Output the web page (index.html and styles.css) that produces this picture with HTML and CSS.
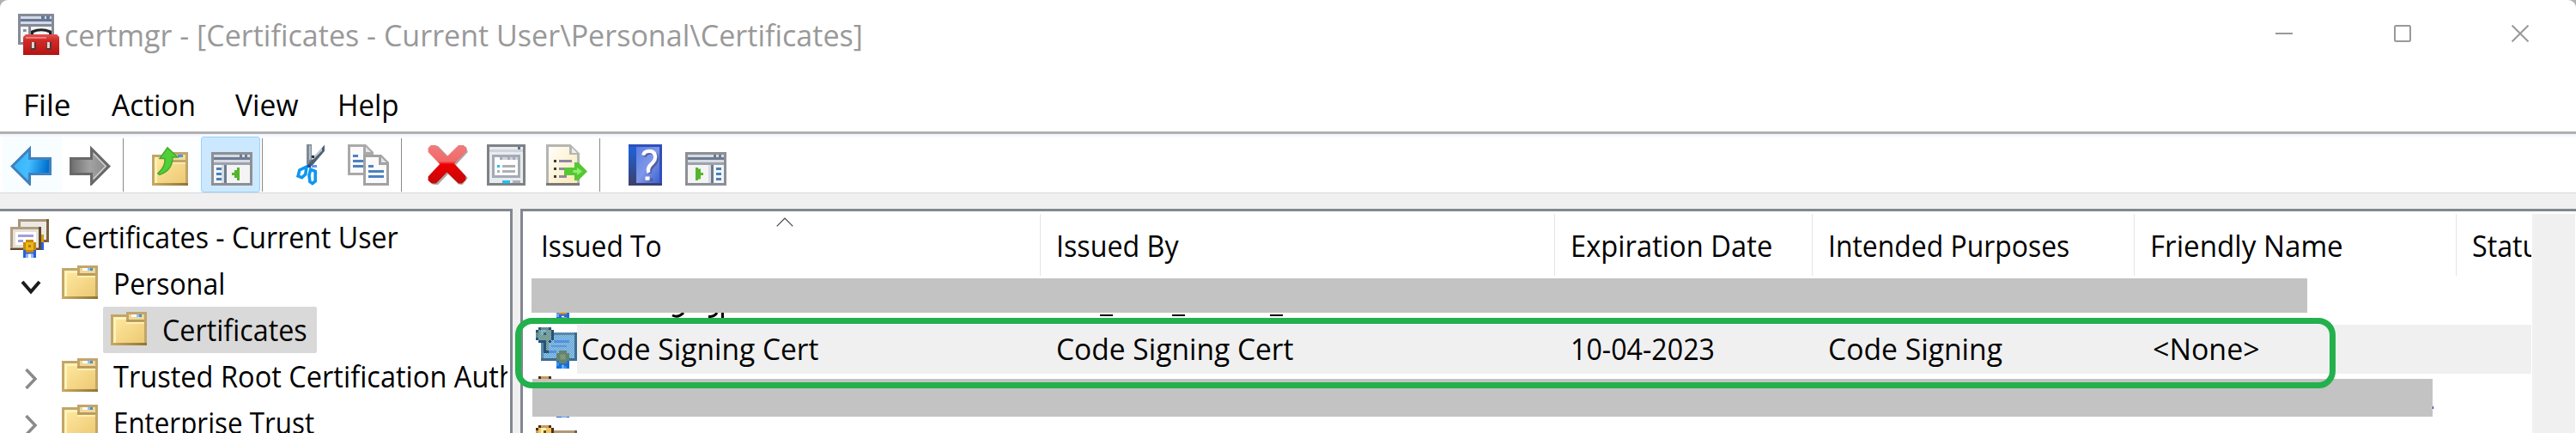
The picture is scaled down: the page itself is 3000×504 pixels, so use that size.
FILE: index.html
```html
<!DOCTYPE html>
<html lang="en">
<head>
<meta charset="utf-8">
<title>certmgr</title>
<link rel="stylesheet" href="styles.css">
</head>
<body>
<svg class="defs" width="0" height="0">
  <defs>
    <linearGradient id="blue" x1="0" x2="1" y1="0" y2="0.2"><stop offset="0" stop-color="#2fb0f8"/><stop offset=".5" stop-color="#45beff"/><stop offset="1" stop-color="#0070cf"/></linearGradient>
    <linearGradient id="gray" x1="0" x2="1"><stop offset="0" stop-color="#6d6d6d"/><stop offset=".5" stop-color="#a2a2a2"/><stop offset="1" stop-color="#858585"/></linearGradient>
    <linearGradient id="gold" x1="0" x2="1" y1="0" y2="1"><stop offset="0" stop-color="#ffe9a0"/><stop offset="1" stop-color="#edc974"/></linearGradient>
    <linearGradient id="edge" x1="0" x2="1"><stop offset="0" stop-color="#c9aa62"/><stop offset="1" stop-color="#8f7434"/></linearGradient>
    <linearGradient id="red" x1="0" x2="0" y1="0" y2="1"><stop offset="0" stop-color="#f07c7c"/><stop offset=".42" stop-color="#f26868"/><stop offset=".5" stop-color="#ee0000"/><stop offset="1" stop-color="#c40808"/></linearGradient>
    <linearGradient id="page" x1="0" x2="1" y1="0" y2="1"><stop offset="0" stop-color="#fffefa"/><stop offset="1" stop-color="#fbe9b4"/></linearGradient>
    <linearGradient id="book" x1="0" x2="1" y1="0" y2="1"><stop offset="0" stop-color="#5b7fe0"/><stop offset=".5" stop-color="#7f97ea"/><stop offset="1" stop-color="#3d62d0"/></linearGradient>
    <linearGradient id="spine" x1="0" x2="0" y1="0" y2="1"><stop offset="0" stop-color="#1f62dc"/><stop offset="1" stop-color="#3a4270"/></linearGradient>
    <linearGradient id="box" x1="0" x2="0" y1="0" y2="1"><stop offset="0" stop-color="#e25450"/><stop offset=".3" stop-color="#d02a28"/><stop offset="1" stop-color="#b31414"/></linearGradient>
    <pattern id="dither" width=".66667" height=".66667" patternUnits="userSpaceOnUse"><rect width=".33333" height=".33333" fill="#0078d7"/><rect x=".33333" y=".33333" width=".33333" height=".33333" fill="#0078d7"/></pattern>
    <symbol id="folder" viewBox="0 0 14 13">
      <path fill="#c2a56a" d="M0 1H6V0H14V13H0Z"/>
      <path fill="url(#gold)" d="M1 2H6V4H13V12H1Z"/>
      <path fill="#fff3b8" d="M1 2H6V3H1ZM1 3H2V12H1ZM6 4H13V4.6H6Z"/>
      <path fill="#f1d796" d="M7 1H13V3H7Z"/>
      <path fill="#b9985a" d="M6 3H13V3.7H6Z"/>
      <rect x="8" y="1" width="2" height="1" fill="#fff"/><rect x="10" y="1" width="1" height="1" fill="#8fc3ff"/><rect x="11" y="1" width="1" height="1" fill="#3d93d6"/>
      <rect y="12" width="14" height="1" fill="url(#edge)"/>
    </symbol>
    <symbol id="cert" viewBox="0 0 16 16">
      <path fill="#b09a7a" d="M2 2H16V13H2Z"/><path fill="#7b6040" d="M15 2H16V13H15ZM2 12H16V13H2Z"/>
      <path fill="#f4efe6" d="M3 3H15V12H3Z"/>
      <path fill="#a9a9dc" d="M7 5H13V6H7ZM5 9H8V10H5ZM6 7H12V7.6H6Z"/>
      <path fill="#4a3018" d="M1 0H6V1H7V5H6V6H5V10H3V6H1V5H0V1H1Z"/>
      <path fill="#c99a58" d="M2 0H5V1H2ZM0 2H1V4H0Z"/>
      <path fill="#f0c45c" d="M1 1H6V5H5V9H4V5H1Z"/><path fill="#fff0b0" d="M2 1H4V3H2Z"/><rect x="3" y="2" width="1" height="1" fill="#6b4a1c"/>
      <path fill="#2a66dc" d="M8 13H13V16H11V14.6H10V16H8Z"/><path fill="#6aa9ff" d="M8 13.500H9V15H8ZM10 15H12V16H10Z"/>
      <path fill="#c98d08" d="M9 9H12V10H13V13H12V14H9V13H8V10H9Z"/><path fill="#f6bd1c" d="M9.500 10.500H11.500V12.500H9.500Z"/>
    </symbol>
  </defs>
</svg>

<div class="window">
  <header class="titlebar">
    <svg class="app-icon" viewBox="0 0 16 16">
      <path fill="#858b96" d="M0 0H14V12H0Z"/><path fill="#d3d9e4" d="M1 1H13V2H1ZM1 3H13V4H1Z"/><path fill="#66789a" d="M1 2H13V3H1ZM9 .7H10.300V2H9ZM11 .7H12.300V2H11Z"/>
      <path fill="#f2f3f6" d="M1 5H4V11H1ZM5 5H13V9H5Z"/><path fill="#8791a0" d="M2 6H3.200V7H2Z"/>
      <path fill="none" stroke="#222" stroke-width="1" d="M5.500 8V7Q9 5.500 12.500 7V8"/>
      <path fill="url(#box)" d="M3 8H15L16 9V16H2V9Z"/><path fill="#e98783" d="M3 9H11V9.600H3Z"/>
      <path fill="#5b3431" d="M5 11H7V14H5ZM11 11H13V14H11Z"/><path fill="#e3d9d4" d="M5.300 11H6.300V13.300H5.300ZM11.300 11H12.300V13.300H11.300Z"/>
    </svg>
    <span class="label title">certmgr - [Certificates - Current User\Personal\Certificates]</span>
    <div class="controls">
      <svg viewBox="0 0 20 20"><path d="M0 10H20"/></svg>
      <svg viewBox="0 0 20 20"><rect x="1" y="1" width="18" height="18" rx="1.500"/></svg>
      <svg viewBox="0 0 20 20"><path d="M.5 .5L19.500 19.500M19.500 .5L.5 19.500"/></svg>
    </div>
  </header>

  <nav class="menubar">
    <div class="menu-file"><span class="label">File</span></div>
    <div class="menu-action"><span class="label">Action</span></div>
    <div class="menu-view"><span class="label">View</span></div>
    <div class="menu-help"><span class="label">Help</span></div>
  </nav>

  <div class="toolbar">
    <div class="group">
      <span class="btn hot"><svg viewBox="0 0 16 16"><path fill="url(#blue)" stroke="#3f82bd" d="M.7 8.500L7.500 1.700V5.500H15.500V11.500H7.500V15.300Z"/></svg></span>
      <span class="btn"><svg viewBox="0 0 16 16"><path fill="url(#gray)" stroke="#696969" d="M15.300 8.500L8.500 1.700V5.500H.5V11.500H8.500V15.300Z"/><path fill="none" stroke="#cfcfcf" stroke-width=".5" d="M9.300 3.600L14 8.500L9.300 13.400"/></svg></span>
    </div>
    <div class="group nav">
      <span class="btn up"><svg viewBox="0 0 16 16">
        <path fill="#c2a56a" d="M0 4H7V3H14V16H0Z"/><path fill="url(#gold)" d="M1 5H7V7H13V15H1Z"/><path fill="#fff1b4" d="M1 5H2V15H1ZM6 7H13V7.500H6Z"/><path fill="#f3dc9c" d="M8 4H13V6H8Z"/><path fill="#4b96dd" d="M10 4H12V5H10Z"/><path fill="url(#edge)" d="M0 15H14V16H0Z"/>
        <path fill="#4fcf38" stroke="#4aa82c" stroke-width=".5" d="M6 1.300L10 5H8Q8 10 3 11.800L2.300 11.300Q5.300 8.700 5 5.500H3Z"/></svg></span>
      <span class="btn active"><svg viewBox="0 0 16 16">
        <path fill="#8c9096" d="M0 3H16V16H0Z"/><path fill="#d5dbe2" d="M1 4H15V5H1ZM1 6H15V7H1Z"/><path fill="#6d7a91" d="M1 5H15V6H1ZM11 4H12V5H11ZM13 4H14V5H13Z"/><path fill="#9ca1ae" d="M1 7H15V8H1Z"/><path fill="#f4f4f4" d="M1 8H15V15H1Z"/><path fill="#d7dce4" d="M4 8H5V15H4Z"/><path fill="#6d7a91" d="M5 8H6V15H5Z"/><path fill="#4381c0" d="M2 9H4V10H2ZM2 11H4V12H2ZM2 13H4V14H2Z"/><path fill="#55b52c" d="M8 11H9V10H10V9H11V14H10V13H9V12H8Z"/></svg></span>
    </div>
    <div class="group">
      <span class="btn"><svg viewBox="0 0 16 16">
        <path fill="#7d8a96" d="M7 0H9V7L8 9L7 7.500Z"/><path fill="#b9c6d0" d="M8 .5H8.600V6H8Z"/><path fill="#4f6070" d="M14 .2V2.600L9 8.500L7.800 7.500Z"/><path fill="#b9c6d0" d="M13 1.300V2.500L9.500 6L9.300 5.200Z"/><path fill="#2b3138" d="M9 4.300H10V5.300H9Z"/>
        <path fill="none" stroke="#0f97ee" stroke-width="1.200" d="M7 8.700L4.300 10L3.700 12.300L5.200 12.900L6.600 11.600Z"/><path fill="none" stroke="#0f97ee" stroke-width="1.200" d="M8.600 9.700L10.400 10.500V14.300L9.300 15.200L8.300 14.500L8 12Z"/><path fill="#6c93f2" d="M9 8H11V9H9Z"/><path fill="#214b92" d="M7.300 7.800H8.700V9H7.300Z"/></svg></span>
      <span class="btn"><svg viewBox="0 0 16 16">
        <path fill="#a9a9a9" d="M0 0H7L10 3V12H0Z"/><path fill="#fafafa" d="M1 1H6V4H9V11H1Z"/><path fill="#e4e4e4" d="M7 1L9 3H7Z"/><path fill="#4d81c2" d="M2 4H4V5H2ZM2 6H6V7H2ZM2 8H6V9H2Z"/>
        <path fill="#a2a2a2" d="M6 4H13L16 7V16H6Z"/><path fill="#fafafa" d="M7 5H12V8H15V15H7Z"/><path fill="#e4e4e4" d="M13 5L15 7H13Z"/><path fill="#4d81c2" d="M8 8H10V9H8ZM8 10H14V11H8ZM8 12H14V13H8Z"/></svg></span>
    </div>
    <div class="group wide">
      <span class="btn"><svg viewBox="0 0 16 16"><path fill="#8d7c7c" opacity=".7" d="M2 .9L4 .6L8.300 5L12.500 .6L15 1L15.600 3L11 8L15.600 13L13.500 15.700L12 15.500L8 11.500L4 15.700L2 15.600L.8 14L6 8Z"/><path fill="url(#red)" d="M1.300 .3H3.200L7.600 4.700L12 .3H14L15 1.400V2.800L10.300 7.500L14.800 12.400V13.800L13.300 15.200H12L7.500 10.800L3.200 15.200H1.500L.2 14V12.500L4.700 7.700L.2 3V1.400Z"/></svg></span>
      <span class="btn"><svg viewBox="0 0 16 16">
        <path fill="#7e8287" d="M0 0H15V16H0Z"/><path fill="#e9ecee" d="M1 1H14V15H1Z"/><path fill="#cfd5db" d="M1 2H14V3H1Z"/><path fill="#5d6f93" d="M12 1H13V2H12Z"/><path fill="#a6aab6" d="M2 4H13V13H2Z"/><path fill="#fff" d="M3 5H5V6H12V12H3Z"/><path fill="#cfd3dc" d="M6 5H8V6H6ZM9 5H10V6H9ZM11 5H12V6H11Z"/><path fill="#18c6f5" d="M4 8H5V9H4ZM6 14H9V15H6Z"/><path fill="#acb1b3" d="M6 8H11V9H6ZM6 10H11V11H6ZM4 10H5V11H4ZM10 14H13V15H10Z"/></svg></span>
      <span class="btn"><svg viewBox="0 0 16 16">
        <path fill="#b5b5b3" d="M0 0H9.500L13 3.500V16H0Z"/><path fill="url(#page)" d="M1 1H9V4H12V15H1Z"/><path fill="#f0f0f0" d="M10 1.300L12 3.300H10Z"/><path fill="#7b7975" d="M0 15H13V16H0Z"/><path fill="#3d3838" d="M3 6H4V7H3ZM3 9H4V10H3ZM3 12H4V13H3Z"/><path fill="#8e89a0" d="M5 6H10V7H5ZM5 9H8V10H5ZM5 12H8V13H5Z"/><path fill="#56c735" d="M7 9H11V7L12.500 7L16 10.500L12.500 14H11V12H7Z"/><path fill="#8cf06c" d="M10.500 10H12V9L14 10.500L12 12V11H10.500Z"/></svg></span>
    </div>
    <div class="group last">
      <span class="btn"><svg viewBox="0 0 16 16"><path fill="#2f4fba" d="M1 0H14V16H1Z"/><path fill="url(#spine)" d="M1 1H4V15H1Z"/><path fill="url(#book)" d="M4 1H13V15H4Z"/><path fill="#3b4270" d="M1 15H14V16H1Z"/>
        <path fill="none" stroke="#5360a0" stroke-width="1.300" d="M7.200 4.700Q8 3 10 3.200T12.100 5.500Q12.100 7 10.500 8.400T9.500 11.300M8.900 13.800H10.400"/><path fill="none" stroke="#fff" stroke-width="1.400" d="M6.700 4.200Q7 2.600 9.100 2.600T11.400 4.800Q11.400 6.300 9.800 7.700T8.800 11M7.500 13.200H9.200"/></svg></span>
      <span class="btn"><svg viewBox="0 0 16 16">
        <path fill="#8c9096" d="M0 3H16V16H0Z"/><path fill="#d5dbe2" d="M1 4H15V5H1ZM1 6H15V7H1Z"/><path fill="#6d7a91" d="M1 5H15V6H1ZM11 4H12V5H11ZM13 4H14V5H13Z"/><path fill="#9ca1ae" d="M1 7H15V8H1Z"/><path fill="#f4f4f4" d="M1 8H15V15H1Z"/><path fill="#d7dce4" d="M9 8H10V15H9Z"/><path fill="#6d7a91" d="M10 8H11V15H10Z"/><path fill="#4381c0" d="M12 9H14V10H12ZM12 11H14V12H12ZM12 13H14V14H12Z"/><path fill="#55b52c" d="M4 9H5V9.500H6V11H7V12H6V13.500H5V14H4Z"/></svg></span>
    </div>
  </div>

  <main class="panes">
    <aside class="tree">
      <div class="node root">
        <svg class="store" viewBox="0 0 15 16">
          <path fill="#a8957a" d="M3 0H14V9H3Z"/><path fill="#7a6140" d="M14 0H15V9H12V8H14Z"/><path fill="#ece9e4" d="M4 1H14V8H4Z"/>
          <path fill="#b19d82" d="M0 3H12V12H0Z"/><path fill="#5f4a2c" d="M11 3H12V12H0V11.300H11Z"/><path fill="#e6e1da" d="M1 4H11V11H1Z"/><path fill="#fff" d="M2 5H10V10H2Z"/><path fill="#9fa0dc" d="M3 6H9V7H3ZM3 8H5V9H3ZM7 8H9V9H7Z"/>
          <path fill="#d49a10" d="M12 6H13V9H12Z"/><path fill="#2a5fe0" d="M12 9H13V12H12ZM5 12H10V15H8.500V13.500H7V15H5Z"/><path fill="#8ab8ff" d="M6 13.500H7V15H6ZM8 13.500H9V15H8Z"/>
          <path fill="#c58a0a" d="M6 8H9V9H10V12H9V13H6V12H5V9H6Z"/><path fill="#edb41c" d="M6 9H9V12H6Z"/><path fill="#b97d04" d="M7 10H8V11H7Z"/></svg>
        <span class="label">Certificates - Current User</span>
      </div>
      <div class="node personal"><svg class="chev open" viewBox="0 0 24 24"><path d="M2 6L12 17.500L22 6"/></svg><svg class="folder"><use href="#folder"/></svg><span class="label">Personal</span></div>
      <div class="node certificates"><div class="selected"><svg class="folder"><use href="#folder"/></svg><span class="label">Certificates</span></div></div>
      <div class="node trusted"><svg class="chev" viewBox="0 0 24 24"><path d="M6.500 1L17 12L6.500 23"/></svg><svg class="folder"><use href="#folder"/></svg><span class="label">Trusted Root Certification Authorities</span></div>
      <div class="node enterprise"><svg class="chev" viewBox="0 0 24 24"><path d="M6.500 1L17 12L6.500 23"/></svg><svg class="folder"><use href="#folder"/></svg><span class="label">Enterprise Trust</span></div>
    </aside>

    <section class="list">
      <div class="content">
        <div class="row head">
          <div class="cell issued-to"><span class="label">Issued To</span><svg class="sort" viewBox="0 0 20 11"><path d="M.7 10.300L10 1L19.300 10.300"/></svg></div>
          <div class="cell issued-by"><span class="label">Issued By</span></div>
          <div class="cell expiration"><span class="label">Expiration Date</span></div>
          <div class="cell purposes"><span class="label">Intended Purposes</span></div>
          <div class="cell friendly"><span class="label">Friendly Name</span></div>
          <div class="cell status"><span class="label">Status</span></div>
        </div>
        <div class="row covered">
          <svg class="cert"><use href="#cert"/></svg>
          <svg class="tails" viewBox="0 0 730 6"><path fill="none" stroke="#000" stroke-width="3" d="M1 3Q8 6.500 14 0M43 4.500Q50 5 53 0M59.500 0V6"/><path fill="#000" d="M499 2H514V4H499ZM583 2H598V4H583ZM697 2H712V4H697Z"/></svg>
          <div class="mask upper"></div>
        </div>
        <div class="row item">
          <div class="cell issued-to"><svg class="cert" viewBox="0 0 16 16"><use href="#cert" width="16" height="16"/><path fill="url(#dither)" d="M1 0H6V1H7V2H16V13H13V16H11V15H10V16H8V13H2V6H1V5H0V1H1Z"/></svg><span class="label">Code Signing Cert</span></div>
          <div class="cell issued-by"><span class="label">Code Signing Cert</span></div>
          <div class="cell expiration"><span class="label">10-04-2023</span></div>
          <div class="cell purposes"><span class="label">Code Signing</span></div>
          <div class="cell friendly"><span class="label">&lt;None&gt;</span></div>
          <div class="cell status"></div>
        </div>
        <div class="row covered"><svg class="cert"><use href="#cert"/></svg><div class="mask lower"></div></div>
        <div class="row covered"><svg class="cert"><use href="#cert"/></svg></div>
      </div>
      <div class="scrollbar"></div>
      <div class="highlight"></div>
    </section>
  </main>
</div>
</body>
</html>
```
FILE: styles.css
```css
* { box-sizing: border-box; }
body { margin: 0; background: #b0b0b0; font: 35px "Open Sans", "Noto Sans", sans-serif; color: #000; overflow: hidden; }
.defs { position: absolute; }
.window { width: 3000px; height: 504px; overflow: hidden; display: flex; flex-direction: column; white-space: nowrap; background: #fff; border-radius: 9px 9px 0 0; }
svg { flex: none; display: block; }
.label { display: inline-block; transform-origin: 0 50%; transform: scaleX(var(--fit, 1)); }

/* Title bar */
.titlebar { height: 82px; line-height: 82px; display: flex; padding-left: 21px; color: #999; }
.app-icon { width: 48px; height: 48px; margin-top: 16px; }
.title { margin-left: 6px; --fit: .973; }
.controls { margin-left: auto; display: flex; gap: 117px; padding: 29px 55px 0 0; }
.controls svg { width: 20px; height: 20px; fill: none; stroke: #999; stroke-width: 2; }
.controls svg:first-child { margin-right: 1px; }

/* Menu */
.menubar { height: 71px; padding: 8px 0 0 27px; line-height: 63px; display: flex; }
.menu-file { width: 103px; }
.menu-action { width: 144px; --fit: .955; }
.menu-view { width: 119px; --fit: .96; }
.menu-help { --fit: .945; }

/* Toolbar */
.toolbar { height: 72px; display: flex; border-top: 3px solid #b0b0b0; border-bottom: 1px solid #d8d8d8; box-shadow: inset 0 3px #f4f8fe; padding-top: 3px; }
.group { width: 162px; display: flex; position: relative; }
.group.nav { padding-left: 3px; }
.group.wide { width: 231px; }
.group:not(.last)::after { content: ""; position: absolute; right: 18px; top: 2px; width: 1px; height: 62px; background: #8a8a8a; }
.btn { width: 69px; height: 65px; padding: 9px 0 0 12px; }
.btn svg { width: 48px; height: 48px; }
.btn.hot { width: 69px; margin: 0 -3px 0 3px; padding-left: 9px; background: #f8fdff; }
.btn.up { background: #fcfeff; }
.btn.active { background: #cce8ff; border: 1px solid #99d1ff; border-radius: 3px; padding: 8px 0 0 11px; }

/* Tree */
.panes { flex: 1; display: flex; background: #f0f0f0; padding-top: 18px; gap: 9px; min-height: 0; }
.tree { width: 597px; border: solid #828790; border-width: 3px 3px 0 0; background: #fff; padding: 3px 3px 0 0; overflow: hidden; }
.node { height: 54px; line-height: 54px; display: flex; overflow: hidden; }
.node .label { margin-left: 18px; }
.store { width: 45px; height: 48px; margin: 6px 0 0 12px; }
.folder { width: 42px; height: 39px; margin-top: 6px; }
.chev { width: 24px; height: 24px; margin: 18px 24px 0; fill: none; stroke: #8a8a8a; stroke-width: 3.500; }
.chev.open { margin-top: 19px; stroke: #1c1c1c; stroke-width: 4; }
.selected { display: flex; width: 249px; margin-left: 120px; padding-left: 9px; background: #d9d9d9; border-radius: 2px; }
.root { --fit: .918; }
.personal { --fit: .914; }
.certificates { --fit: .922; }
.trusted { --fit: .93; }
.enterprise { --fit: .895; }

/* Certificate list */
.list { flex: 1; min-width: 0; position: relative; border: solid #828790; border-width: 3px 0 0 3px; background: #fff; padding: 3px 1px 0 2px; display: flex; }
.content { width: 2337px; height: 255px; overflow: hidden; }
.scrollbar { width: 50px; margin-left: 1px; background: #f0f0f0; }
.row { height: 57px; line-height: 56px; position: relative; display: grid; grid-template-columns: 601px 599px 300px 375px 375px 87px; }
.cell { padding-left: 18px; }
.head { height: 72px; line-height: 74px; }
.head .cell { border-right: 1px solid #e5e5e5; overflow: hidden; }
.head .status { border: 0; --fit: .92; }
.head .issued-to { padding-left: 19px; position: relative; --fit: .907; }
.head .issued-by { --fit: .92; }
.head .expiration { --fit: .935; }
.head .purposes { --fit: .911; }
.head .friendly { --fit: .948; }
.sort { position: absolute; left: 293px; top: 4px; width: 20px; height: 11px; fill: none; stroke: #444; stroke-width: 1.200; }
.item { background: linear-gradient(90deg, #fff 61px, #f0f0f0 61px); }
.item .issued-to { display: flex; padding-left: 13px; --fit: .958; }
.item .issued-to .label { margin-left: 5px; }
.item .issued-by { --fit: .958; }
.item .expiration { --fit: .92; }
.item .purposes { --fit: .962; }
.item .friendly { padding-left: 21px; --fit: .969; }
.cert { width: 48px; height: 48px; margin-top: 3px; }
.covered .cert { margin-left: 13px; }
.tails { position: absolute; left: 171px; top: 43px; width: 730px; height: 6px; }
.mask { position: absolute; background: #c3c3c3; }
.mask.upper { left: 8px; top: 3px; width: 2068px; height: 40px; }
.mask.lower { left: 9px; top: 6px; width: 2213px; height: 44px; }
.mask.lower::after { content: ""; position: absolute; left: 100%; bottom: 9px; width: 1px; height: 3px; background: #123a7a; }
.highlight { position: absolute; left: -9px; top: 124px; width: 2120px; height: 82px; border: 7px solid #22b14c; border-radius: 20px; }
```
